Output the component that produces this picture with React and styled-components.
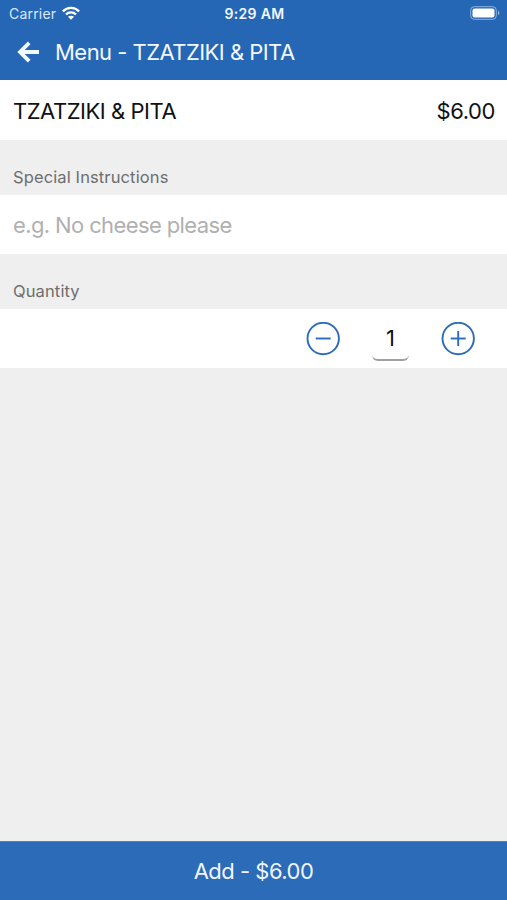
import { useState } from "react";
import styled, { createGlobalStyle } from "styled-components";

const GlobalStyle = createGlobalStyle`
  * {
    box-sizing: border-box;
  }
  body {
    margin: 0;
    background: #efefef;
    font-family: Inter, "Liberation Sans", sans-serif;
  }
`;

const Screen = styled.div`
  display: flex;
  flex-direction: column;
  height: 900px;
  background: #efefef;
`;

const Header = styled.header`
  height: 80px;
  background: #2667b5;
  color: #f3f8ff;
`;

const StatusBar = styled.div`
  display: grid;
  grid-template-columns: 1fr auto 1fr;
  align-items: center;
  height: 27px;
  padding: 0 7px 0 9px;
`;

const Carrier = styled.div`
  display: flex;
  align-items: center;
  gap: 6px;
  font-size: 14px;
  line-height: 27px;
  letter-spacing: 0.2px;
  color: #d9e8fa;
`;

const Clock = styled.div`
  font-size: 14px;
  font-weight: 600;
  letter-spacing: 0.35px;
`;

const Battery = styled.svg`
  justify-self: end;
`;

const TitleBar = styled.div`
  display: flex;
  align-items: center;
  height: 50px;
  padding-left: 17px;
  gap: 15px;
`;

const BackButton = styled.button`
  display: flex;
  padding: 0;
  border: 0;
  background: none;
  color: inherit;
`;

const Title = styled.h1`
  margin: 0;
  font-size: 22px;
  font-weight: 400;
  letter-spacing: -0.53px;
`;

const Row = styled.div`
  display: flex;
  align-items: center;
  justify-content: ${props => props.end ? "flex-end" : "space-between"};
  height: ${props => props.height || 59}px;
  padding: 0 ${props => props.end ? 32 : 12}px 0 13px;
  background: #fff;
`;

const ItemText = styled.span`
  padding-top: 2px;
  font-size: 22px;
  letter-spacing: ${props => props.spacing || 0}px;
  color: #111;
`;

const Label = styled.label`
  display: block;
  height: 55px;
  padding: 27px 13px 0;
  font-size: 16.5px;
  line-height: 20px;
  letter-spacing: 0.12px;
  color: #6e6e6e;
`;

const Input = styled.input`
  width: 100%;
  padding: 0;
  border: 0;
  outline: 0;
  background: none;
  font: inherit;
  font-size: 22px;
  letter-spacing: -0.62px;
  &::placeholder {
    color: #b0b0b0;
  }
`;

const RoundButton = styled.button`
  display: flex;
  padding: 0;
  border: 0;
  background: none;
  color: #2c6cb9;
`;

const Count = styled.div`
  width: 37px;
  height: 44px;
  margin: 0 32px;
  border-bottom: 2px solid #a0a0a0;
  border-radius: 6px;
  font-size: 22px;
  line-height: 43px;
  text-align: center;
  color: #111;
`;

const AddButton = styled.button`
  height: 59px;
  margin-top: auto;
  padding: 0;
  border: 0;
  border-top: 1px solid #4c83c4;
  background: #2b6bb8;
  color: #f0f6ff;
  font: inherit;
  font-size: 22px;
  letter-spacing: -0.5px;
`;

function WifiIcon() {
  return (
    <svg width="18" height="15" viewBox="0 0 18 15" fill="none" stroke="#fff" strokeWidth="2.4">
      <path d="M0.9 5.3C5.4 0.7 12.6 0.7 17.1 5.3" />
      <path d="M4 8.5C6.8 5.7 11.2 5.7 14 8.5" />
      <path d="M9 13.8L6 10.8C7.7 9.3 10.3 9.3 12 10.8Z" fill="#fff" stroke="none" />
    </svg>
  );
}

function BatteryIcon() {
  return (
    <Battery width="30" height="15" viewBox="0 0 30 15" fill="none">
      <rect x="0.7" y="0.7" width="25.6" height="12.6" rx="3.6" stroke="#8fb4e0" />
      <rect x="2.5" y="2.5" width="22" height="9" rx="2" fill="#fff" />
      <path d="M28 4.8C30 5.8 30 8.2 28 9.2Z" fill="#8fb4e0" />
    </Battery>
  );
}

function StepIcon({ plus }) {
  return (
    <svg width="34" height="34" viewBox="0 0 34 34" fill="none" stroke="currentColor" strokeWidth="1.9">
      <circle cx="17.2" cy="16.5" r="15.7" />
      <path d="M9.7 16.5H24.7" />
      {plus && <path d="M17.2 9V24" />}
    </svg>
  );
}

export default function App() {
  const [quantity, setQuantity] = useState(1);
  const total = (quantity * 6).toFixed(2);

  return (
    <>
      <GlobalStyle />
      <Screen>
        <Header>
          <StatusBar>
            <Carrier>Carrier <WifiIcon /></Carrier>
            <Clock>9:29 AM</Clock>
            <BatteryIcon />
          </StatusBar>
          <TitleBar>
            <BackButton aria-label="Back">
              <svg width="23" height="22" viewBox="0 0 23 22" fill="none" stroke="currentColor" strokeWidth="3.8">
                <path d="M12.2 1.8L3 11L12.2 20.2M3 11H22" />
              </svg>
            </BackButton>
            <Title>Menu - TZATZIKI &amp; PITA</Title>
          </TitleBar>
        </Header>
        <Row height={60}>
          <ItemText spacing={-0.46}>TZATZIKI &amp; PITA</ItemText>
          <ItemText spacing={-0.4}>$6.00</ItemText>
        </Row>
        <Label htmlFor="instructions">Special Instructions</Label>
        <Row>
          <Input id="instructions" placeholder="e.g. No cheese please" />
        </Row>
        <Label as="div">Quantity</Label>
        <Row end>
          <RoundButton aria-label="Decrease" onClick={() => setQuantity(Math.max(1, quantity - 1))}>
            <StepIcon />
          </RoundButton>
          <Count>{quantity}</Count>
          <RoundButton aria-label="Increase" onClick={() => setQuantity(quantity + 1)}>
            <StepIcon plus />
          </RoundButton>
        </Row>
        <AddButton>Add - ${total}</AddButton>
      </Screen>
    </>
  );
}
